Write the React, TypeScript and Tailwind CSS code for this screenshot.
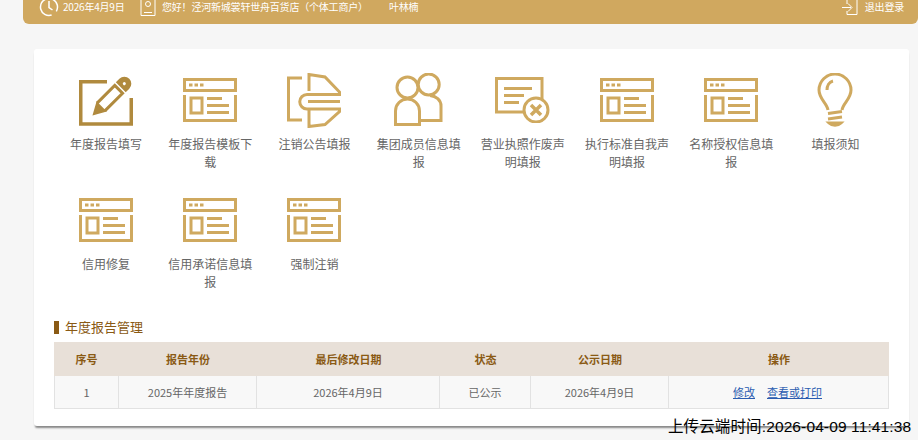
const gold = "#cfa95f";

const WindowIcon = () => (
  <svg width="54" height="44" viewBox="0 0 54 44" fill="none" stroke={gold} strokeWidth="3">
    <rect x="1.5" y="1.5" width="51" height="11" />
    <path d="M6 7h3.5M11.5 7H15M17 7h3.5" />
    <path d="M1.5 17V42.5H52.500V17" />
    <rect x="8" y="20" width="11" height="15" />
    <path d="M24 20.500H39M24 27.500H46M24 34.500H46" />
  </svg>
);

const PencilIcon = () => (
  <svg width="54" height="52" viewBox="0 0 54 52" fill="none" stroke="#b08a3e" strokeWidth="3.500">
    <path d="M28 7.750H1.750V50H52.250V24" />
    <g transform="translate(13.500 41.500) rotate(45)">
      <path d="M0 -2L-5.500 -12H5.500Z" fill="#b08a3e" strokeWidth="2" />
      <path d="M-5.500 -12V-37H5.500V-12" strokeWidth="3" />
      <path d="M-7 -40H7V-45A7 7 0 0 0 -7 -45Z" fill="#b08a3e" stroke="none" />
      <circle cx="0" cy="-45" r="1.500" fill="#fff" stroke="none" />
    </g>
  </svg>
);

const CancelIcon = () => (
  <svg width="54" height="55" viewBox="0 0 54 55" fill="none" stroke={gold} strokeWidth="3">
    <path d="M15 5H1.500V47H15" />
    <path d="M22 18V1.500L38 4L52.500 19V21.500H20A7 7 0 0 0 20 36H52.500V38.500L38 51.500L22 53.500V37" />
    <path d="M21 28.500H53" />
  </svg>
);

const GroupIcon = () => (
  <svg width="50" height="54" viewBox="0 0 50 54" fill="none" stroke={gold} strokeWidth="3">
    <circle cx="13.500" cy="14.500" r="10.500" />
    <circle cx="34.700" cy="11.500" r="10.500" />
    <path d="M1.500 51.500V38A12 12 0 0 1 25.500 38V51.500Z" />
    <path d="M26 47.500H47V33C47 27 42 23 36 22.500" />
  </svg>
);

const LicenseIcon = () => (
  <svg width="55" height="46" viewBox="0 0 55 46" fill="none" stroke={gold} strokeWidth="3">
    <path d="M47 22V1.500H1.500V35H28" />
    <path d="M9 11.500H37M9 18.500H29M9 25.500H24" />
    <circle cx="41" cy="33" r="12" />
    <path d="M36 28L46 38M46 28L36 38" strokeWidth="3.500" />
  </svg>
);

const BulbIcon = () => (
  <svg width="36" height="54" viewBox="0 0 36 54" fill="none" stroke={gold} strokeWidth="3">
    <path d="M11 37C10 30 2 26 2 17A16 16 0 0 1 34 17C34 26 26 30 25 37" />
    <path d="M10 17C10 13 12 9 16 8" />
    <path d="M11 40.500L25 38.500M11 46L25 44" />
    <path d="M12 50C15 53 21 53 24 50Z" fill={gold} />
  </svg>
);

const items = [
  { name: "年度报告填写", icon: <PencilIcon /> },
  { name: "年度报告模板下载", icon: <WindowIcon /> },
  { name: "注销公告填报", icon: <CancelIcon /> },
  { name: "集团成员信息填报", icon: <GroupIcon /> },
  { name: "营业执照作废声明填报", icon: <LicenseIcon /> },
  { name: "执行标准自我声明填报", icon: <WindowIcon /> },
  { name: "名称授权信息填报", icon: <WindowIcon /> },
  { name: "填报须知", icon: <BulbIcon /> },
  { name: "信用修复", icon: <WindowIcon /> },
  { name: "信用承诺信息填报", icon: <WindowIcon /> },
  { name: "强制注销", icon: <WindowIcon /> },
];

const columns = [
  { name: "序号", width: "w-[65px]" },
  { name: "报告年份", width: "w-[138px]" },
  { name: "最后修改日期", width: "w-[183px]" },
  { name: "状态", width: "w-[91px]" },
  { name: "公示日期", width: "w-[138px]" },
  { name: "操作", width: "w-[220px]" },
];

const App = () => {
  return (
    <div className="relative h-[440px] w-[918px] overflow-hidden bg-[#f6f6f6] font-['Noto_Sans_CJK_SC',sans-serif]">
      {/* Top bar */}
      <div className="ml-[23px] h-6 rounded-b-md bg-[#d0a85f] text-[10px] tracking-[-0.2px] text-white">
        <div className="flex h-3 items-center pl-[16px] pr-[14px]">
          <svg width="20" height="20" viewBox="0 0 20 20" fill="none" stroke="#fff" strokeWidth="1.500" className="mt-[2px]">
            <circle cx="10" cy="10" r="8.500" strokeDasharray="40 6" transform="rotate(120 10 10)" />
            <path d="M10 4V10.500L13.500 13" />
          </svg>
          <span className="ml-[4px] w-[77px]">2026年4月9日</span>
          <svg width="16" height="18" viewBox="0 0 16 18" fill="none" stroke="#fff" strokeWidth="1" className="mt-[1px]">
            <path d="M1 0V17.500H15V0" />
            <circle cx="8" cy="6" r="2.500" />
            <path d="M4 14.500H12" />
          </svg>
          <span className="ml-[6px] w-[227px] whitespace-nowrap">您好！泾河新城裳轩世舟百货店（个体工商户）</span>
          <span>叶林楠</span>
          <svg width="16" height="16" viewBox="0 0 16 16" fill="none" stroke="#fff" strokeWidth="1" className="ml-auto mt-[2px]">
            <path d="M5 5V0.500H15V15.500H5V12" />
            <path d="M0 8.500H9M6 4.500L10 8.500L6 12.500" />
          </svg>
          <span className="ml-[7px]">退出登录</span>
        </div>
      </div>

      {/* Main card */}
      <div className="ml-[34px] mt-[25px] h-[377px] w-[875px] rounded-[3px] bg-white px-5 pt-[23px] shadow-[0_3px_2px_-1px_rgba(0,0,0,0.45)]">
        <div className="grid grid-cols-[repeat(8,104.2px)] auto-rows-[120px]">
          {items.map((item) => (
            <div key={item.name} className="flex flex-col items-center">
              <div className="flex h-[56px] items-center justify-center">{item.icon}</div>
              <div className="mt-[7px] w-[90px] text-center text-xs leading-[18px] text-[#666]">{item.name}</div>
            </div>
          ))}
        </div>

        {/* Report table */}
        <div className="mt-[9px] flex h-[13px] items-center border-l-[5px] border-[#8a5a14] pb-[2px] pl-[6px] text-[13px] text-[#8a5a14]">
          年度报告管理
        </div>
        <table className="mt-[8px] w-[835px] table-fixed border-separate border-spacing-0 text-center text-[11px] text-[#666]">
          <thead>
            <tr className="h-[34px] bg-[#e8e0d8] font-bold text-[#8a5a14]">
              {columns.map((col) => (
                <th key={col.name} className={col.width}>{col.name}</th>
              ))}
            </tr>
          </thead>
          <tbody>
            <tr className="h-[33px] bg-[#f8f8f8]">
              <td className="border-x border-b border-[#e2e2e2]">1</td>
              <td className="border-r border-b border-[#e2e2e2]">2025年年度报告</td>
              <td className="border-r border-b border-[#e2e2e2]">2026年4月9日</td>
              <td className="border-r border-b border-[#e2e2e2]">已公示</td>
              <td className="border-r border-b border-[#e2e2e2]">2026年4月9日</td>
              <td className="border-r border-b border-[#e2e2e2] pr-[2px] text-[#2a5cb0]">
                <a href="#" className="underline">修改</a>
                <a href="#" className="ml-[12px] underline">查看或打印</a>
              </td>
            </tr>
          </tbody>
        </table>
      </div>

      {/* Upload time overlay */}
      <div className="absolute left-[668px] top-[417px] whitespace-nowrap font-['Liberation_Sans','Noto_Sans_CJK_SC',sans-serif] text-[15.5px] leading-[20px] tracking-[0.12px] text-black">
        上传云端时间:2026-04-09 11:41:38
      </div>
    </div>
  );
};

export default App;
